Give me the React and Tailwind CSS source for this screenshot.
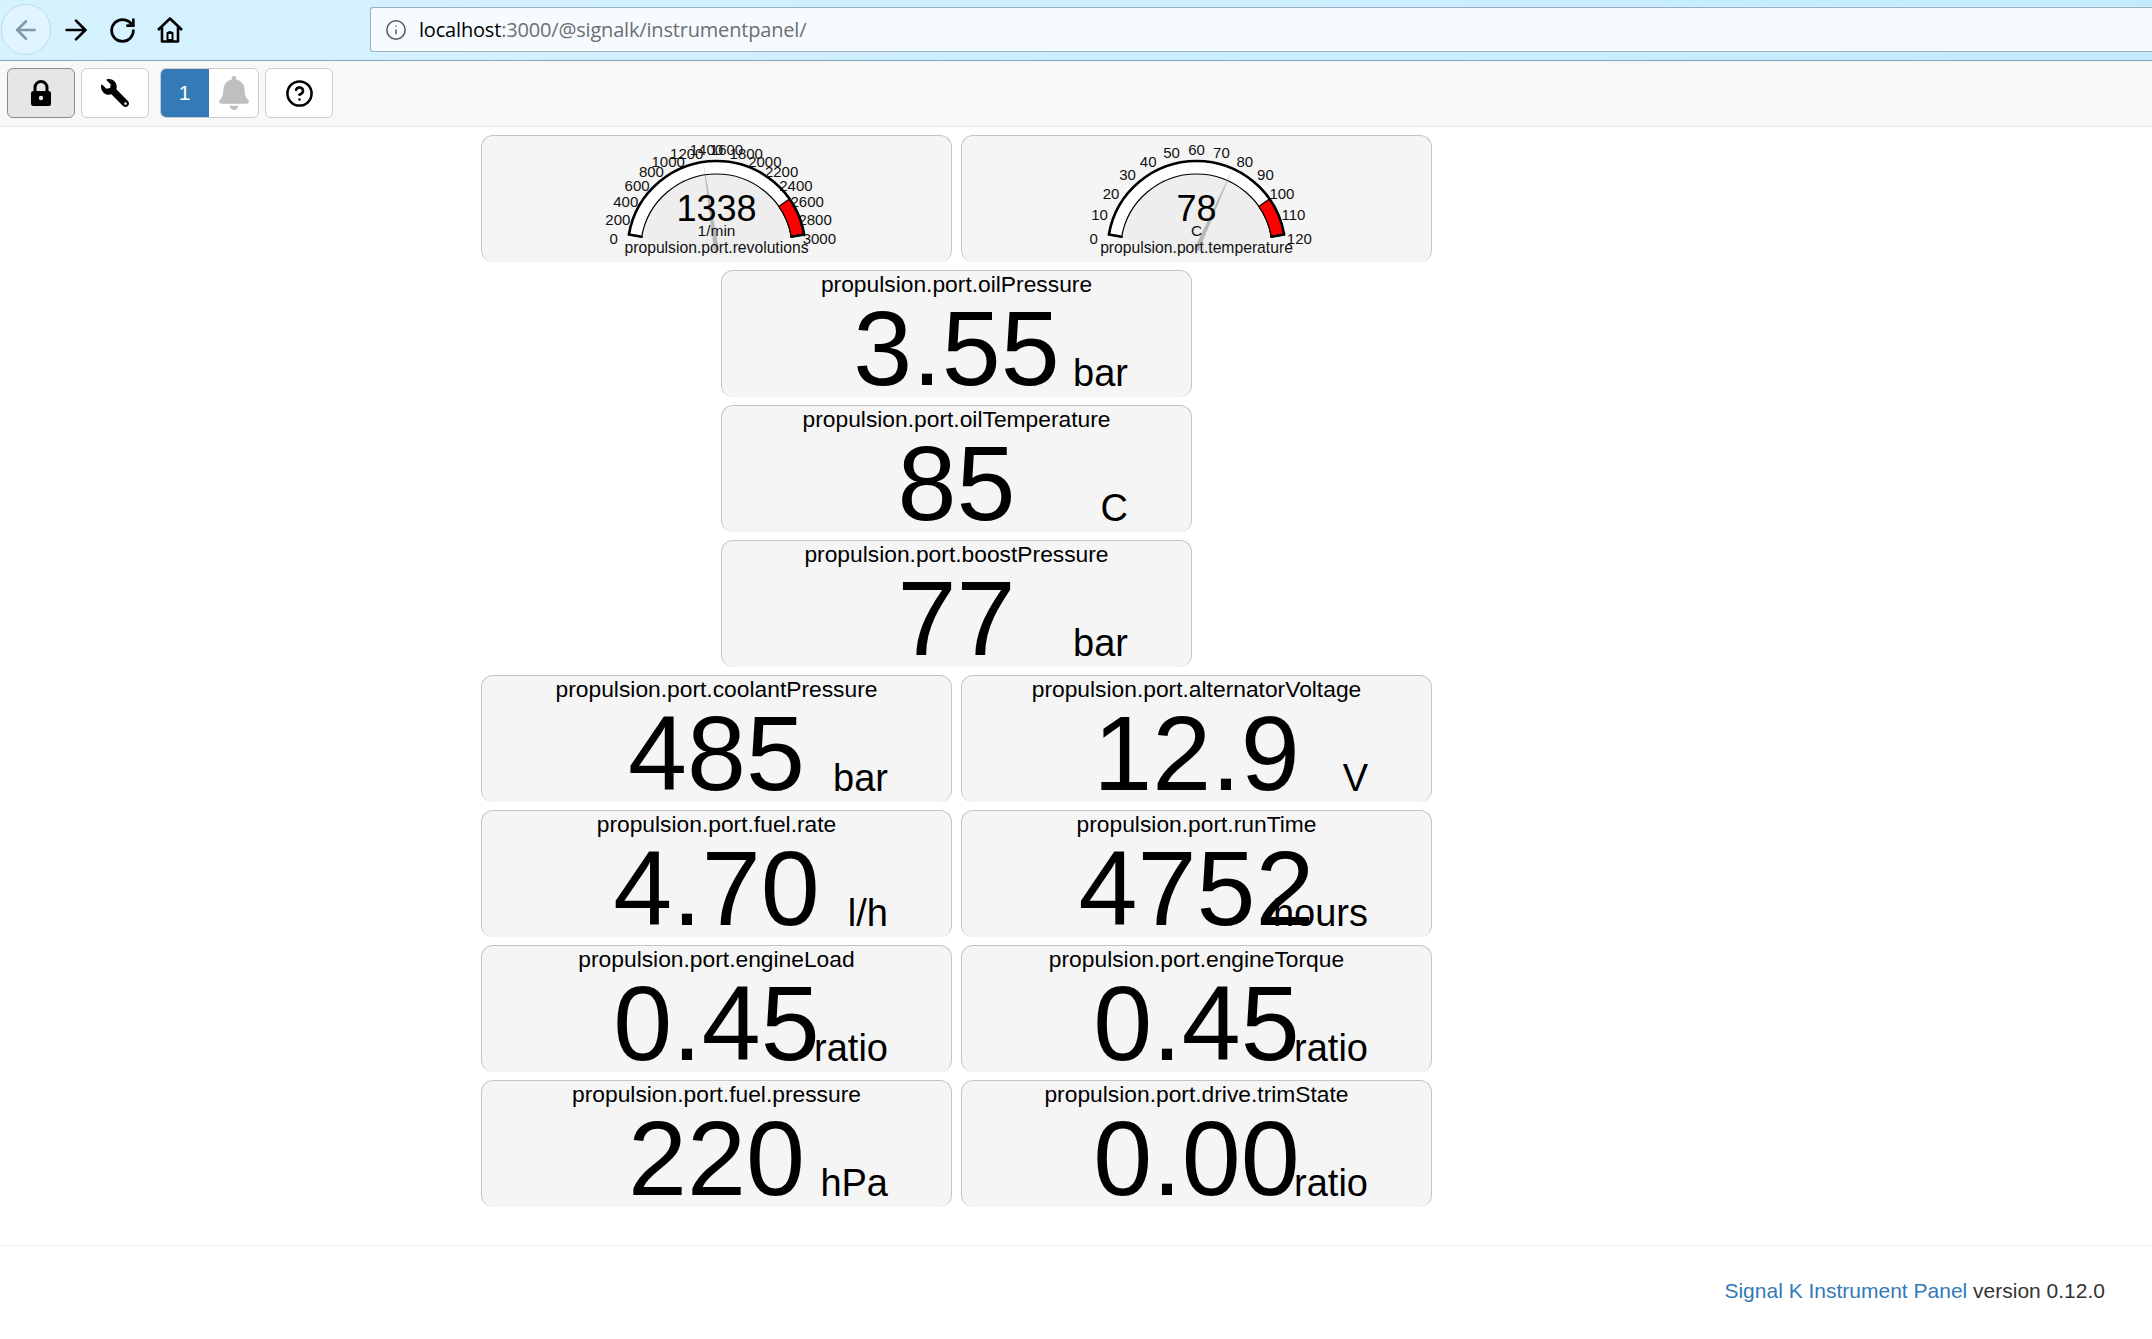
import React from 'react';
import { ArrowLeft, ArrowRight, RotateCw, Info, CircleHelp } from 'lucide-react';
import { FaWrench, FaBell } from 'react-icons/fa';

const CX = 234.5;
const CY = 114;

function pt(r, deg) {
  const a = (deg * Math.PI) / 180;
  return [CX + r * Math.sin(a), CY - r * Math.cos(a)];
}

function arc(r, from, to) {
  const [x, y] = pt(r, to);
  return `A${r} ${r} 0 0 ${to > from ? 1 : 0} ${x} ${y}`;
}

function band(from, to, outer = 89, inner = 76) {
  const [x1, y1] = pt(outer, from);
  const [x2, y2] = pt(inner, to);
  return `M${x1} ${y1} ${arc(outer, from, to)} L${x2} ${y2} ${arc(inner, to, from)} Z`;
}

function Gauge({ labels, value, unit, path, needle }) {
  const [ix1, iy1] = pt(76, -80);
  const [ix2, iy2] = pt(76, 80);
  const [ox1, oy1] = pt(89, -80);
  const [tx, ty] = pt(90, needle);
  const [bx, by] = pt(2.5, needle + 90);
  const [cx, cy] = pt(2.5, needle - 90);
  const step = 167 / (labels.length - 1);
  return (
    <div className="h-[127px] overflow-hidden rounded-[12px] border border-b-0 border-[#c4c4c4] bg-[#f5f5f5]">
      <svg width="470" height="127" className="block font-['Liberation_Sans',Arial,sans-serif]">
        <path d={`M${ix1} ${iy1} ${arc(76, -80, 80)} Q${CX} 137 ${ix1} ${iy1} Z`} fill="#eeeeee" />
        <path d={band(-80, 80)} fill="#fff" stroke="#000" strokeWidth="1.2" strokeLinejoin="round" />
        <path d={band(55, 80)} fill="#ff0000" stroke="#000" strokeWidth="1.2" strokeLinejoin="round" />
        <path
          d={`M${ix1} ${iy1} L${ox1} ${oy1} ${arc(89, -80, 80)} L${ix2} ${iy2}`}
          fill="none"
          stroke="#000"
          strokeWidth="2.6"
          strokeLinejoin="round"
          strokeLinecap="round"
        />
        <polygon points={`${tx},${ty} ${bx},${by} ${cx},${cy}`} fill="#666" opacity="0.4" />
        {labels.map((t, i) => {
          const a = ((-83.5 + i * step) * Math.PI) / 180;
          return (
            <text
              key={t}
              x={CX + 103.5 * Math.sin(a)}
              y={CY - 100 * Math.cos(a) + 5}
              textAnchor="middle"
              fontSize="15"
              fill="#111"
            >
              {t}
            </text>
          );
        })}
        <text x={CX} y="85" textAnchor="middle" fontSize="36" fill="#000">{value}</text>
        <text x={CX} y="100" textAnchor="middle" fontSize="15.500" fill="#111">{unit}</text>
        <text x={CX} y="117" textAnchor="middle" fontSize="15.700" fill="#111">{path}</text>
      </svg>
    </div>
  );
}

function Display({ title, value, unit, center }) {
  return (
    <div
      className={
        'relative h-[127px] overflow-hidden rounded-[12px] border border-b-0 border-[#c4c4c4] bg-[#f5f5f5] text-black col-span-2 ' +
        (center ? 'col-start-2' : '')
      }
    >
      <div className="h-[29px] -translate-y-px text-center text-[22.800px] leading-[29px]">{title}</div>
      <div className="text-center text-[106px] leading-[96px] whitespace-nowrap">{value}</div>
      <div className="absolute right-[63px] bottom-[-1px] text-[38px] leading-[50px]">{unit}</div>
    </div>
  );
}

function NavButton({ children, active }) {
  return (
    <button
      className={
        'flex h-[50px] w-[68px] items-center justify-center rounded-[6px] border ' +
        (active ? 'border-[#8c8c8c] bg-[#e6e6e6]' : 'border-[#cccccc] bg-white')
      }
    >
      {children}
    </button>
  );
}

export default function App() {
  return (
    <div className="min-h-screen overflow-hidden bg-white font-['Liberation_Sans',Arial,sans-serif]">
      {/* browser bar */}
      <div className="flex h-[61px] items-start border-b border-[#7fa5ba] bg-gradient-to-r from-[#d6f2ff] to-[#c4ebff]">
        <div className="mt-[4px] ml-[1px] flex h-[51px] w-[50px] items-center justify-center rounded-full border border-[#bcdbe8] bg-[#e0f5ff]">
          <ArrowLeft size={30} strokeWidth={2} color="#7f98a5" />
        </div>
        <div className="mt-[14px] ml-[9px] flex items-center gap-[16px]">
          <ArrowRight size={32} strokeWidth={2} color="#000" />
          <RotateCw size={29} strokeWidth={2.2} color="#000" />
          <svg width="28" height="28" viewBox="0 0 28 28" className="ml-[3px]">
            <path d="M2 14 14 2.500 26 14M6 11.500V25.500H22V11.500" fill="none" stroke="#000" strokeWidth="2.600" strokeLinejoin="round" />
            <path d="M10.500 25.500V16.500Q14 13.500 17.500 16.500V25.500Z" fill="#000" />
            <rect x="12.500" y="18" width="3" height="5" fill="#d6f2ff" />
          </svg>
        </div>
        <div className="mt-[7px] ml-[186px] flex h-[45px] flex-1 items-center rounded-l-[3px] border-y border-l border-[#9db1bd] bg-[#f5fbff] pl-[14px] font-['Open_Sans',sans-serif] text-[20px] tracking-[-0.18px]">
          <Info size={22} strokeWidth={1.6} color="#555" />
          <span className="ml-[12px] text-black">localhost</span>
          <span className="text-[#6f6f6f]">:3000/@signalk/instrumentpanel/</span>
        </div>
      </div>

      {/* navbar */}
      <nav className="flex h-[66px] items-start gap-[6px] border-b border-[#e7e7e7] bg-[#f8f8f8] pt-[7px] pl-[7px]">
        <NavButton active>
          <svg width="22" height="28" viewBox="0 0 22 28">
            <path d="M5 13V8.500a6 6 0 0 1 12 0V13" fill="none" stroke="#000" strokeWidth="3" />
            <rect x="1" y="12" width="20" height="15" rx="2.500" fill="#000" />
            <circle cx="11" cy="19" r="2.200" fill="#e6e6e6" />
          </svg>
        </NavButton>
        <NavButton>
          <FaWrench size={28} color="#000" className="-scale-x-100" />
        </NavButton>
        <div className="ml-[5px] flex h-[50px] w-[99px] overflow-hidden rounded-[6px] border border-[#cccccc] bg-white">
          <div className="-my-px -ml-px flex w-[49px] items-center justify-center bg-[#337ab7] text-[21px] text-white">1</div>
          <div className="flex flex-1 items-center justify-center">
            <FaBell size={34} color="#bfbfbf" />
          </div>
        </div>
        <NavButton>
          <CircleHelp size={29} strokeWidth={2.100} color="#000" />
        </NavButton>
      </nav>

      {/* instruments */}
      <main className="ml-[481px] mt-[8px] grid w-[951px] grid-cols-4 gap-x-[9px] gap-y-[8px]">
        <div className="col-span-2">
          <Gauge
            labels={['0', '200', '400', '600', '800', '1000', '1200', '1400', '1600', '1800', '2000', '2200', '2400', '2600', '2800', '3000']}
            value="1338"
            unit="1/min"
            path="propulsion.port.revolutions"
            needle={-8.600}
          />
        </div>
        <div className="col-span-2">
          <Gauge
            labels={['0', '10', '20', '30', '40', '50', '60', '70', '80', '90', '100', '110', '120']}
            value="78"
            unit="C"
            path="propulsion.port.temperature"
            needle={24}
          />
        </div>
        <Display center title="propulsion.port.oilPressure" value="3.55" unit="bar" />
        <div className="col-span-1" />
        <Display center title="propulsion.port.oilTemperature" value="85" unit="C" />
        <div className="col-span-1" />
        <Display center title="propulsion.port.boostPressure" value="77" unit="bar" />
        <div className="col-span-1" />
        <Display title="propulsion.port.coolantPressure" value="485" unit="bar" />
        <Display title="propulsion.port.alternatorVoltage" value="12.9" unit="V" />
        <Display title="propulsion.port.fuel.rate" value="4.70" unit="l/h" />
        <Display title="propulsion.port.runTime" value="4752" unit="hours" />
        <Display title="propulsion.port.engineLoad" value="0.45" unit="ratio" />
        <Display title="propulsion.port.engineTorque" value="0.45" unit="ratio" />
        <Display title="propulsion.port.fuel.pressure" value="220" unit="hPa" />
        <Display title="propulsion.port.drive.trimState" value="0.00" unit="ratio" />
      </main>

      {/* footer */}
      <footer className="mt-[38px] border-t border-[#eeeeee] pt-[30px] pr-[47px] text-right text-[21px] leading-[30px] text-[#333333]">
        <a className="text-[#337ab7]">Signal K Instrument Panel</a> version 0.12.0
      </footer>
    </div>
  );
}
